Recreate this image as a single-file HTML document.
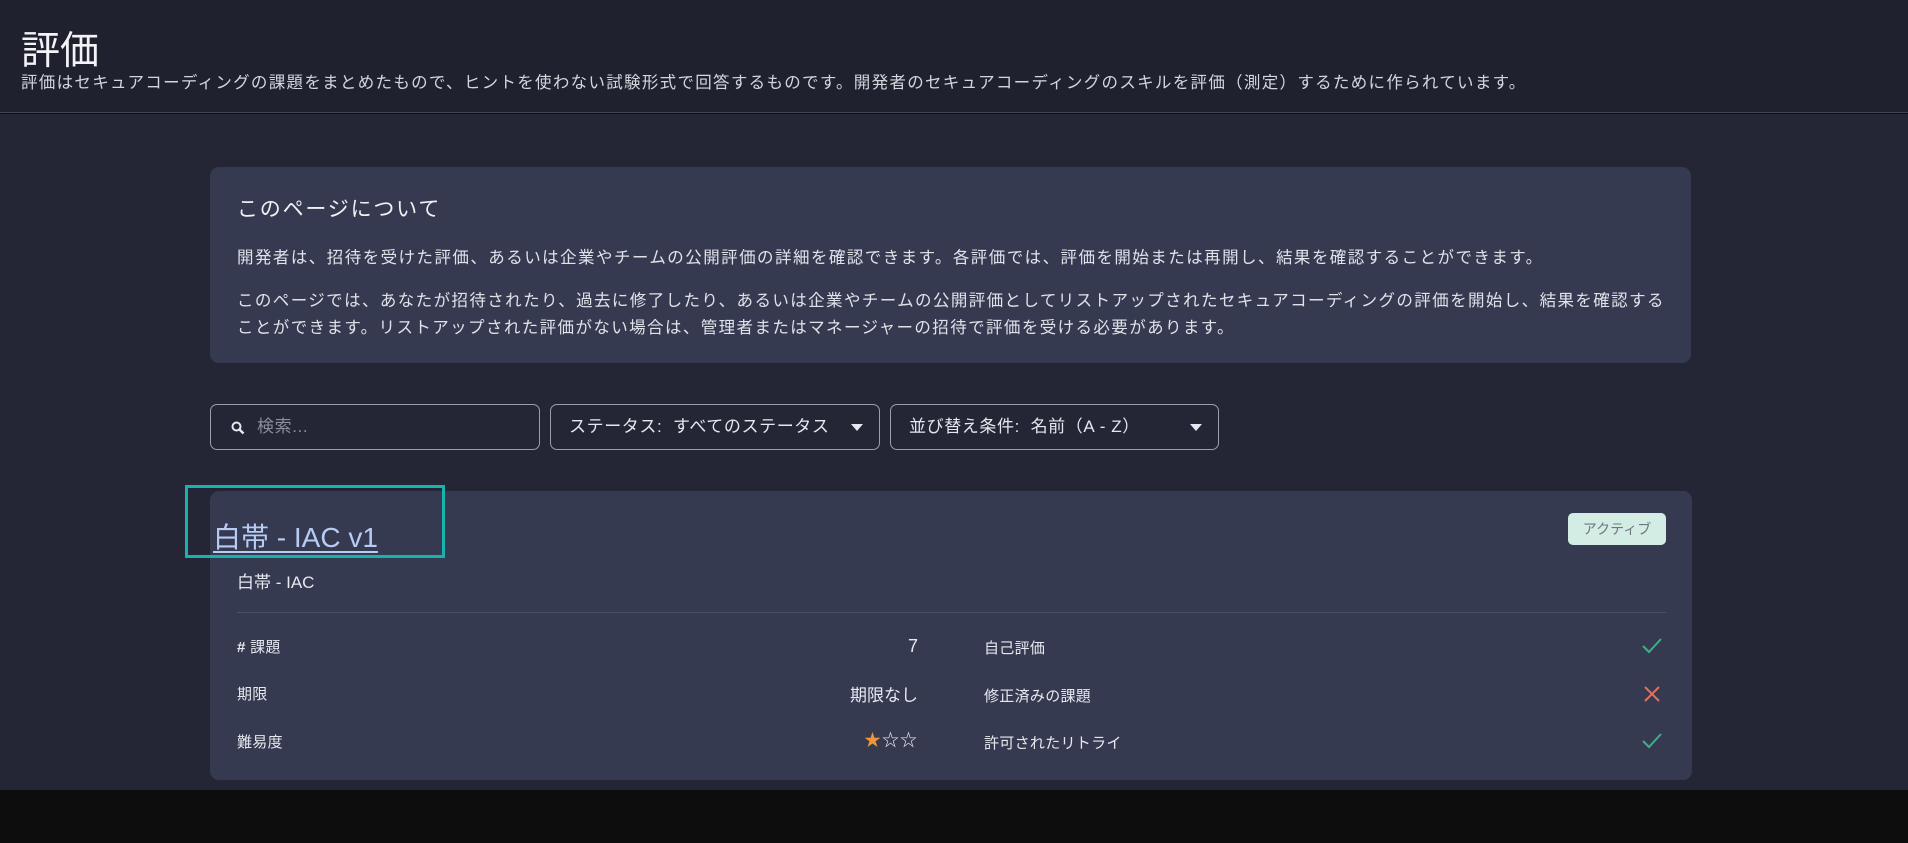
<!DOCTYPE html>
<html><head><meta charset="utf-8"><style>
*{margin:0;padding:0;box-sizing:border-box}
body{width:1908px;height:843px;overflow:hidden;background:#0d0d0d;font-family:"Liberation Sans","Noto Sans CJK JP",sans-serif;color:#e6e8ef;position:relative}
.hdr{position:absolute;left:0;top:0;width:1908px;height:113px;background:#20212e;border-bottom:1px solid #434657}
.main{position:absolute;left:0;top:114px;width:1908px;height:676px;background:#242636}
.abs{position:absolute;white-space:nowrap}
.box{position:absolute;background:#363a50;border-radius:9px}
.inp{position:absolute;top:404px;height:46px;border:1px solid #9a9db0;border-radius:7px;background:#242636;font-size:17px;line-height:44px;padding-left:18px;letter-spacing:0.6px}
.tri{position:absolute;right:16px;top:19px;width:0;height:0;border-left:6px solid transparent;border-right:6px solid transparent;border-top:7px solid #e6e8ef}
.lbl{font-size:15px;color:#e6e8ef;letter-spacing:0.3px}
</style></head><body>
<div class="hdr">
<div class="abs" style="left:21px;top:20px;font-size:39px;color:#f2f3f7">評価</div>
<div class="abs" style="left:21px;top:69px;font-size:16.5px;letter-spacing:1.3px;color:#d4d6de">評価はセキュアコーディングの課題をまとめたもので、ヒントを使わない試験形式で回答するものです。開発者のセキュアコーディングのスキルを評価（測定）するために作られています。</div>
</div>
<div class="main"></div>
<div class="box" style="left:210px;top:167px;width:1481px;height:196px"></div>
<div class="abs" style="left:237px;top:193px;font-size:21px;letter-spacing:1.8px;color:#f0f1f5">このページについて</div>
<div class="abs" style="left:237px;top:244px;font-size:16.5px;letter-spacing:1.45px;color:#e0e2ea">開発者は、招待を受けた評価、あるいは企業やチームの公開評価の詳細を確認できます。各評価では、評価を開始または再開し、結果を確認することができます。</div>
<div class="abs" style="left:237px;top:288px;font-size:16.5px;line-height:27px;letter-spacing:1.4px;color:#e0e2ea">このページでは、あなたが招待されたり、過去に修了したり、あるいは企業やチームの公開評価としてリストアップされたセキュアコーディングの評価を開始し、結果を確認する<br>ことができます。リストアップされた評価がない場合は、管理者またはマネージャーの招待で評価を受ける必要があります。</div>

<div class="inp" style="left:210px;width:330px;color:#8a8d9c;padding-left:46px">検索...
<svg style="position:absolute;left:20px;top:16px" width="14" height="14" viewBox="0 0 14 14"><circle cx="5.5" cy="5.5" r="4" stroke="#e6e8ef" stroke-width="2" fill="none"/><path d="M8.5 8.5L12.5 12.5" stroke="#e6e8ef" stroke-width="2.4"/></svg></div>
<div class="inp" style="left:550px;width:330px">ステータス:&nbsp; すべてのステータス<div class="tri"></div></div>
<div class="inp" style="left:890px;width:329px">並び替え条件:&nbsp; 名前（A - Z）<div class="tri"></div></div>

<div class="box" style="left:210px;top:491px;width:1482px;height:289px"></div>
<div style="position:absolute;left:185px;top:485px;width:260px;height:73px;border:3px solid #17b3ad"></div>
<div class="abs" style="left:213px;top:516px;font-size:28px;color:#b7cbf5;text-decoration:underline;text-underline-offset:4px">白帯 - IAC v1</div>
<div class="abs" style="left:1568px;top:513px;width:98px;height:32px;background:#d3ede5;border-radius:5px;color:#6f7680;font-size:14px;line-height:32px;text-align:center">アクティブ</div>
<div class="abs" style="left:237px;top:568px;font-size:17px;color:#e6e8ef">白帯 - IAC</div>
<div class="abs" style="left:237px;top:612px;width:1429px;height:1px;background:#4c5064"></div>

<div class="abs lbl" style="left:237px;top:636px"><b>#</b> 課題</div>
<div class="abs" style="left:800px;width:118px;text-align:right;top:636px;font-size:18px">7</div>
<div class="abs lbl" style="left:237px;top:683px">期限</div>
<div class="abs" style="left:800px;width:118px;text-align:right;top:681px;font-size:17px">期限なし</div>
<div class="abs lbl" style="left:237px;top:731px">難易度</div>
<div class="abs" style="left:800px;width:118px;text-align:right;top:726px;font-size:17px;letter-spacing:1px"><span style="color:#f0953a">★</span>☆☆</div>

<div class="abs lbl" style="left:984px;top:637px">自己評価</div>
<div class="abs lbl" style="left:984px;top:685px">修正済みの課題</div>
<div class="abs lbl" style="left:984px;top:732px">許可されたリトライ</div>
<svg class="abs" style="left:1641px;top:637px" width="22" height="18" viewBox="0 0 22 18"><path d="M2 9L8 15L20 2" stroke="#3fae8a" stroke-width="2" fill="none"/></svg>
<svg class="abs" style="left:1643px;top:685px" width="18" height="18" viewBox="0 0 18 18"><path d="M2 2L16 16M16 2L2 16" stroke="#e8705f" stroke-width="2" fill="none"/></svg>
<svg class="abs" style="left:1641px;top:732px" width="22" height="18" viewBox="0 0 22 18"><path d="M2 9L8 15L20 2" stroke="#3fae8a" stroke-width="2" fill="none"/></svg>
</body></html>
